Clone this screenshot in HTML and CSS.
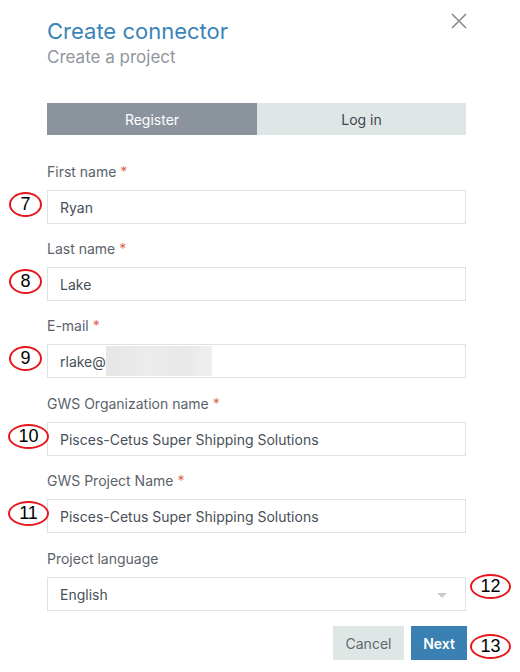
FILE: index.html
```html
<!DOCTYPE html>
<html>
<head>
<meta charset="utf-8">
<link rel="stylesheet" href="styles.css">
</head>
<body>
<div class="dialog">
  <button class="close" aria-label="Close">
    <svg width="16" height="16" viewBox="0 0 16 16"><path d="M1 1 L15 15 M15 1 L1 15" stroke="#8a8a8a" stroke-width="1.6" fill="none"/></svg>
  </button>
  <h1 class="title">Create connector</h1>
  <h2 class="subtitle">Create a project</h2>

  <div class="tabs">
    <div class="tab active">Register</div>
    <div class="tab">Log in</div>
  </div>

  <div class="field">
    <label class="label">First name <span class="req">*</span></label>
    <div class="input">Ryan</div>
    <span class="mark m7">7</span>
  </div>
  <div class="field">
    <label class="label">Last name <span class="req">*</span></label>
    <div class="input">Lake</div>
    <span class="mark m8">8</span>
  </div>
  <div class="field">
    <label class="label">E-mail <span class="req">*</span></label>
    <div class="input">rlake@<span class="blur"></span></div>
    <span class="mark m9">9</span>
  </div>
  <div class="field wide">
    <label class="label">GWS Organization name <span class="req">*</span></label>
    <div class="input">Pisces-Cetus Super Shipping Solutions</div>
    <span class="mark m10">10</span>
  </div>
  <div class="field">
    <label class="label">GWS Project Name <span class="req">*</span></label>
    <div class="input">Pisces-Cetus Super Shipping Solutions</div>
    <span class="mark m11">11</span>
  </div>
  <div class="field wide">
    <label class="label">Project language</label>
    <div class="input select">English<span class="caret"></span></div>
    <span class="mark m12">12</span>
  </div>

  <div class="actions">
    <button class="btn cancel">Cancel</button>
    <button class="btn next">Next</button>
    <span class="mark m13">13</span>
  </div>
</div>
</body>
</html>
```

FILE: styles.css
```css
* { box-sizing: border-box; }
html, body { margin: 0; padding: 0; background: #fff; }
body {
  font-family: Inter, "Noto Sans", "Liberation Sans", sans-serif;
  width: 520px;
  height: 672px;
  overflow: hidden;
}
.dialog {
  position: relative;
  padding: 18px 54px 0 47px;
  width: 520px;
}
.close {
  position: absolute;
  left: 451px;
  top: 13px;
  width: 16px;
  height: 16px;
  padding: 0;
  border: 0;
  background: none;
}
.close svg { display: block; }
.title {
  margin: 0;
  font-size: 22px;
  line-height: 26px;
  font-weight: 400;
  color: #3a84b8;
}
.subtitle {
  margin: 2px 0 0;
  font-size: 17px;
  line-height: 22px;
  font-weight: 400;
  color: #8f969d;
}
.tabs {
  display: flex;
  margin-top: 35px;
  height: 32px;
  width: 419px;
}
.tab {
  flex: 0 0 210px;
  display: flex;
  align-items: center;
  justify-content: center;
  font-size: 14px;
  color: #3d4650;
  background: #dfe7e6;
}
.tab + .tab { flex: 1 1 auto; }
.tab.active { background: #8b949d; color: #fff; }
.field {
  position: relative;
  margin-top: 27px;
  width: 419px;
}
.field + .field { margin-top: 15px; }
.field + .field.wide { margin-top: 16px; }
.label {
  display: block;
  font-size: 14px;
  line-height: 20px;
  color: #5b626a;
}
.req { color: #e0694d; }
.input {
  position: relative;
  margin-top: 8px;
  height: 34px;
  border: 1px solid #dce3e3;
  padding: 0 12px;
  display: flex;
  align-items: center;
  font-size: 14px;
  color: #474f58;
  background: #fff;
}
.blur {
  display: inline-block;
  width: 106px;
  height: 30px;
  background: linear-gradient(90deg, #e6e6e6, #ececec 40%, #e8e8e8 70%, #efefef);
  filter: blur(0.6px);
}
.caret {
  position: absolute;
  right: 18px;
  top: 15px;
  width: 0;
  height: 0;
  border-left: 5px solid transparent;
  border-right: 5px solid transparent;
  border-top: 5px solid #c9cccf;
}
.actions {
  position: relative;
  display: flex;
  justify-content: flex-end;
  gap: 7px;
  margin-top: 15px;
  width: 420px;
}
.btn {
  height: 34px;
  border: 0;
  font-family: inherit;
  font-size: 14px;
  padding: 0;
}
.cancel { width: 71px; background: #dfe7e6; color: #5f6770; }
.next { width: 56px; background: #3a80b3; color: #fff; font-weight: 600; }
.mark {
  position: absolute;
  height: 25px;
  border: 2px solid #e8161b;
  border-radius: 50%;
  display: flex;
  align-items: center;
  justify-content: center;
  font-family: "Liberation Sans", Arial, sans-serif;
  font-size: 18px;
  color: #000;
  background: transparent;
}
.m7, .m8, .m9 { left: -38px; top: 30px; width: 33px; }
.m10, .m11 { left: -39px; top: 30px; width: 41px; }
.m12 { left: 423px; top: 25px; width: 41px; }
.m13 { left: 423px; top: 8px; width: 41px; }
```
